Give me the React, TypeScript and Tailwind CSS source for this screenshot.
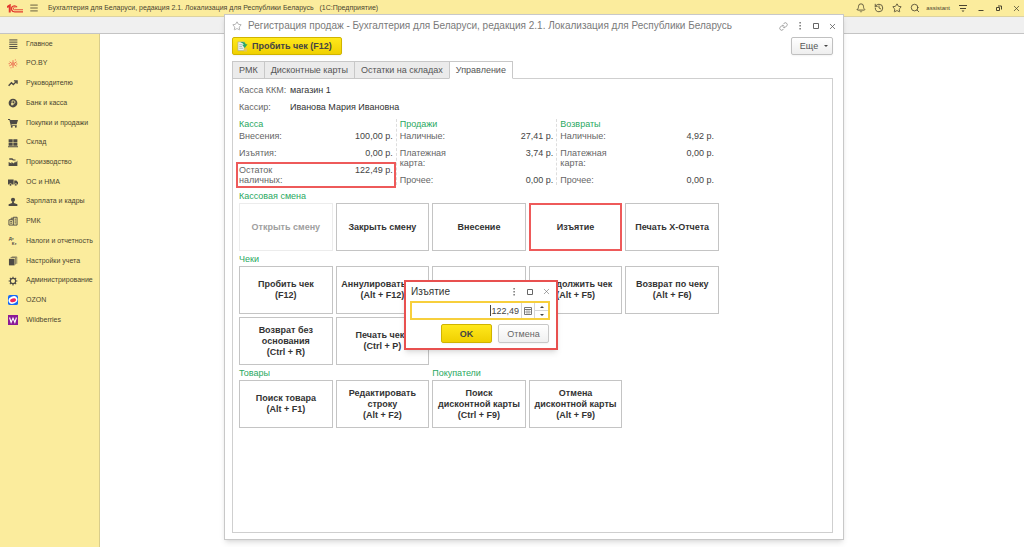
import React from "react";
import { Bell, History, Link, Menu, Search, Star, X } from "lucide-react";

type Tile = {
  lines: string[];
  label?: string;
  disabled?: boolean;
  marked?: boolean;
};

type Total = { name: string; value: string; marked?: boolean };

const dark = "#4d4a45";

const sections: { name: string; icon: React.ReactNode }[] = [
  {
    name: "Главное",
    icon: (
      <path d="M2 1.500h13M2 5h13M2 8.500h13M2 12h13M2 15h13" stroke={dark} strokeWidth="1.600" />
    ),
  },
  {
    name: "PO.BY",
    icon: (
      <g stroke="#e5483c" fill="none" strokeWidth="1.200">
        <path d="M8 2v4M8 10v4M2.500 4.500l3.700 2.500M9.800 9l3.700 2.500M2 11l4-2M9.800 7l4-2.500" />
        <circle cx="8" cy="8" r="1.800" />
        <path d="M1 7.500h2M13 8h2M4 14h1.500M11 1.500h1.500" />
      </g>
    ),
  },
  {
    name: "Руководителю",
    icon: (
      <path
        d="M1 12.500l4.500-5 3 3L14 5M9.500 4.500H14.500V9"
        fill="none"
        stroke={dark}
        strokeWidth="2.200"
      />
    ),
  },
  {
    name: "Банк и касса",
    icon: (
      <g>
        <circle cx="8" cy="8" r="7" fill={dark} />
        <path
          d="M6.500 12V4.500h2.500a2 2 0 0 1 0 4.300H5M5 10.500h4"
          fill="none"
          stroke="#fbec9d"
          strokeWidth="1.300"
        />
      </g>
    ),
  },
  {
    name: "Покупки и продажи",
    icon: (
      <g fill={dark}>
        <path d="M0 1.500h3l.8 1.800H16l-2 6.200H5.500l.3 1.300H14v1.400H4.500L2.200 3H0z" />
        <circle cx="6" cy="14" r="1.500" />
        <circle cx="12.500" cy="14" r="1.500" />
      </g>
    ),
  },
  {
    name: "Склад",
    icon: (
      <path
        d="M1 2h6.500v5H1zM8.500 2H15v5H8.500zM1 8h6.500v4.500H1zM8.500 8H15v4.500H8.500zM0 13.200h16v1.500H0z"
        fill={dark}
      />
    ),
  },
  {
    name: "Производство",
    icon: (
      <path
        d="M1 14.500V8l4.500 2.500V8l4 2.500 1.500-3h1l.5 1.500L15 5.500v9zM2 2h5l2 2h3v1.500H8L6 4.500H2z"
        fill={dark}
      />
    ),
  },
  {
    name: "ОС и НМА",
    icon: (
      <g fill={dark}>
        <path d="M0 4h9v8H0zM10 5.500h3.500L16 8.500V12h-6z" />
        <circle cx="4" cy="12.500" r="2" stroke="#fbec9d" />
        <circle cx="12.500" cy="12.500" r="2" stroke="#fbec9d" />
      </g>
    ),
  },
  {
    name: "Зарплата и кадры",
    icon: (
      <g fill={dark}>
        <circle cx="8" cy="4.500" r="3.300" />
        <path d="M6.500 7h3v2.500l5.500 2V14.500H1v-3l5.500-2z" />
      </g>
    ),
  },
  {
    name: "РМК",
    icon: (
      <g fill="none" stroke={dark} strokeWidth="1.500">
        <path d="M1.500 6h7v8.500h-7zM8.500 14.500h6V2h-6v4M5 6V3.500h3.500" />
        <path d="M10.500 5h2.500M10.500 8h2.500M10.500 11h2.500M3.500 9h3M3.500 11.500h3" />
      </g>
    ),
  },
  {
    name: "Налоги и отчетность",
    icon: (
      <g
        fill={dark}
        fontFamily="Liberation Sans, sans-serif"
        fontSize="7"
        fontWeight="bold"
      >
        <text x="1" y="7">
          Дт
        </text>
        <text x="6" y="14">
          Кт
        </text>
      </g>
    ),
  },
  {
    name: "Настройки учета",
    icon: (
      <g fill={dark}>
        <path d="M1.500 4.500h9V15h-9z" />
        <path
          d="M3.500 3.500l1-1h7.500v11M6 1.500h8v11"
          fill="none"
          stroke={dark}
        />
      </g>
    ),
  },
  {
    name: "Администрирование",
    icon: (
      <g fill="none" stroke={dark}>
        <circle cx="8" cy="8" r="4.200" strokeWidth="1.800" />
        <path
          d="M8 1v3M8 12v3M1 8h3M12 8h3M3 3l2 2M11 11l2 2M3 13l2-2M11 5l2-2"
          strokeWidth="1.800"
        />
      </g>
    ),
  },
  {
    name: "OZON",
    icon: (
      <g>
        <rect width="16" height="16" rx="3" fill="#1769f5" />
        <ellipse cx="8" cy="8" rx="7.300" ry="5.800" fill="#fff" transform="rotate(-25 8 8)" />
        <ellipse cx="8" cy="8.500" rx="4.800" ry="3" fill="#f0245c" transform="rotate(-15 8 8)" />
      </g>
    ),
  },
  {
    name: "Wildberries",
    icon: (
      <g>
        <rect width="16" height="16" fill="#8b1a97" />
        <path
          d="M2.500 4l2.500 8L8 5l3 7 2.500-8"
          fill="none"
          stroke="#fff"
          strokeWidth="1.800"
        />
      </g>
    ),
  },
];

const tabs = ["РМК", "Дисконтные карты", "Остатки на складах", "Управление"];

const totals: { title: string; rows: Total[] }[] = [
  {
    title: "Касса",
    rows: [
      { name: "Внесения:", value: "100,00 р." },
      { name: "Изъятия:", value: "0,00 р." },
      { name: "Остаток наличных:", value: "122,49 р.", marked: true },
    ],
  },
  {
    title: "Продажи",
    rows: [
      { name: "Наличные:", value: "27,41 р." },
      { name: "Платежная карта:", value: "3,74 р." },
      { name: "Прочее:", value: "0,00 р." },
    ],
  },
  {
    title: "Возвраты",
    rows: [
      { name: "Наличные:", value: "4,92 р." },
      { name: "Платежная карта:", value: "0,00 р." },
      { name: "Прочее:", value: "0,00 р." },
    ],
  },
];

const shiftTiles: Tile[] = [
  { lines: ["Открыть смену"], disabled: true },
  { lines: ["Закрыть смену"] },
  { lines: ["Внесение"] },
  { lines: ["Изъятие"], marked: true },
  { lines: ["Печать X-Отчета"] },
];

const receiptTiles: Tile[] = [
  { lines: ["Пробить чек", "(F12)"] },
  { lines: ["Аннулировать чек", "(Alt + F12)"] },
  { lines: [], label: "Отложить чек" },
  { lines: ["Продолжить чек", "(Alt + F5)"] },
  { lines: ["Возврат по чеку", "(Alt + F6)"] },
  { lines: ["Возврат без", "основания", "(Ctrl + R)"] },
  { lines: ["Печать чека", "(Ctrl + P)"] },
];

const goodsTiles: Tile[] = [
  { lines: ["Поиск товара", "(Alt + F1)"] },
  { lines: ["Редактировать", "строку", "(Alt + F2)"] },
];

const customerTiles: Tile[] = [
  { lines: ["Поиск", "дисконтной карты", "(Ctrl + F9)"] },
  { lines: ["Отмена", "дисконтной карты", "(Alt + F9)"] },
];

const TileButton = ({ tile }: { tile: Tile }) => {
  let look = "border border-[#c4c4c4] text-[#333]";
  if (tile.disabled) look = "border border-[#ececec] text-[#a0a0a0]";
  if (tile.marked) look = "border-2 border-[#ee5a5a] text-[#333]";
  return (
    <button
      disabled={tile.disabled}
      aria-label={tile.label}
      className={`flex h-12 flex-col items-center justify-center bg-white text-[9px] leading-[11px] font-bold whitespace-nowrap ${look}`}
    >
      {tile.lines.map((line) => (
        <span key={line}>{line}</span>
      ))}
    </button>
  );
};

const GroupTitle = ({ children }: { children: React.ReactNode }) => (
  <h2 className="h-[15px] leading-[17px] text-[#2aa861]">{children}</h2>
);

const Dots = () => (
  <svg viewBox="0 0 8 8" className="h-2 w-2" fill="#555">
    <path d="M3.500 0h1.200v1.500H3.500zM3.500 3h1.200v1.500H3.500zM3.500 6h1.200v1.500H3.500z" />
  </svg>
);

const Square = () => (
  <svg viewBox="0 0 8 8" className="h-2 w-2" fill="none" stroke="#666">
    <path d="M1.500 1.500h5v5h-5z" />
  </svg>
);

const WithdrawDialog = () => (
  <div
    role="dialog"
    aria-label="Изъятие"
    className="absolute top-[265px] left-[179px] w-[154px] border-2 border-[#e8504f] bg-white pr-1.5 pb-[5px] pl-1 shadow-md"
  >
    <div className="-mr-0.5 flex h-[19px] items-center">
      <span className="grow pl-px text-[10px] text-[#333]">Изъятие</span>
      <div className="flex items-center gap-2 pr-px">
        <button aria-label="Меню">
          <Dots />
        </button>
        <button aria-label="Развернуть">
          <Square />
        </button>
        <button aria-label="Закрыть">
          <X size={9} color="#666" strokeWidth={1.5} />
        </button>
      </div>
    </div>
    <div className="flex h-[19px] items-stretch border-2 border-[#f7cf3c]">
      <input
        aria-label="Сумма"
        defaultValue="122,49"
        className="my-0.5 ml-auto w-[29px] border-l border-[#444] text-right text-[9px] text-[#444] outline-none"
      />
      <button
        aria-label="Калькулятор"
        className="ml-0.5 flex w-[13px] items-center justify-center border-l border-[#d5d5d5]"
      >
        <svg viewBox="0 0 8 8" className="h-2 w-2" fill="none" stroke="#777">
          <path d="M.5.5h7v7h-7zM.5 2.500h7" />
          <path d="M3 3v5M5 3v5M1 5h6" strokeWidth=".6" />
        </svg>
      </button>
      <div className="flex w-[14px] flex-col border-l border-[#d5d5d5]">
        <button
          aria-label="Больше"
          className="flex grow items-center justify-center"
        >
          <svg viewBox="0 0 4 2" className="h-0.5 w-1" fill="#444">
            <path d="M0 2l2-2 2 2z" />
          </svg>
        </button>
        <button
          aria-label="Меньше"
          className="flex grow items-center justify-center border-t border-[#d5d5d5]"
        >
          <svg viewBox="0 0 4 2" className="h-0.5 w-1" fill="#444">
            <path d="M0 0l2 2 2-2z" />
          </svg>
        </button>
      </div>
    </div>
    <div className="mt-1 flex justify-end gap-1.5 pr-px">
      <button className="h-[19px] w-[51px] rounded-xs border border-[#d0b400] bg-linear-to-b from-[#ffe81a] to-[#f0d000] font-bold text-[#444] shadow-xs">
        OK
      </button>
      <button className="h-[19px] w-[51px] rounded-xs border border-[#c8c8c8] bg-linear-to-b from-white to-[#f0f0f0] text-[#666] shadow-xs">
        Отмена
      </button>
    </div>
  </div>
);

const SalesWindow = () => (
  <section className="absolute top-[14px] right-[180px] bottom-[7px] left-[224px] flex min-w-[600px] flex-col border border-[#c8c8c8] bg-white pr-2.5 pb-1.5 pl-[7px] text-[9px] leading-[10px] text-[#666] shadow-md">
    <div className="-mr-1 flex h-[22px] items-center">
      <Star size={10} color="#888" strokeWidth={1.5} />
      <h1 className="grow pl-1.5 text-[10px] text-[#7a7a7a]">
        Регистрация продаж - Бухгалтерия для Беларуси, редакция 2.1. Локализация
        для Республики Беларусь
      </h1>
      <div className="flex items-center gap-2">
        <button aria-label="Ссылка">
          <Link size={9} color="#666" strokeWidth={1.5} />
        </button>
        <button aria-label="Меню">
          <Dots />
        </button>
        <button aria-label="Развернуть">
          <Square />
        </button>
        <button aria-label="Закрыть">
          <X size={9} color="#555" />
        </button>
      </div>
    </div>

    <div className="flex items-center justify-between">
      <button className="flex h-[18px] w-[110px] items-center gap-1 rounded-xs border border-[#d0b400] bg-linear-to-b from-[#ffe81a] to-[#f0d000] pl-1 font-bold whitespace-nowrap text-[#444] shadow-xs">
        <svg viewBox="0 0 12 12" className="h-[11px] w-[11px] shrink-0">
          <path
            d="M1 1h7v9.500H1z"
            fill="#eef0ee"
            stroke="#a9a98a"
            strokeWidth=".7"
          />
          <path
            d="M2.500 4h3M2.500 6h3M2.500 8h4"
            stroke="#8fa3a8"
            strokeWidth=".7"
          />
          <path d="M3.500 1.500C7 .5 9 1 9.500 3.500h2L8.500 7.500 5.500 4h2C7 2.500 5.500 2 3.500 1.500z" fill="#29a567" />
          <path d="M7.500 8h3.500v3.500H7.500z" fill="#e3c65c" />
        </svg>
        Пробить чек (F12)
      </button>
      <button className="flex h-[18px] w-[42px] items-center justify-center gap-1.5 rounded-xs border border-[#c0c0c0] bg-linear-to-b from-white to-[#eee] pl-1 text-[#555] shadow-xs">
        Еще
        <svg viewBox="0 0 4 2" className="h-0.5 w-1" fill="#444">
          <path d="M0 0h4L2 2z" />
        </svg>
      </button>
    </div>

    <div role="tablist" className="z-10 mt-1.5 -mb-px flex h-[18px]">
      {tabs.map((tab) => (
        <button
          key={tab}
          role="tab"
          aria-selected={tab === "Управление"}
          className="-mr-px border border-[#c8c8c8] bg-[#ebebeb] px-1.5 text-[#555] aria-selected:border-b-white aria-selected:bg-white"
        >
          {tab}
        </button>
      ))}
    </div>

    <div className="grow border border-[#cfcfcf] px-1.5 pt-1.5">
      <dl className="grid grid-cols-[51px_1fr] gap-y-[7px]">
        <dt className="whitespace-nowrap">Касса ККМ:</dt>
        <dd className="text-[#333]">магазин 1</dd>
        <dt>Кассир:</dt>
        <dd className="text-[#333]">Иванова Мария Ивановна</dd>
      </dl>

      <div className="mt-[7px] grid w-[482px] grid-cols-3">
        {totals.map((group) => (
          <div
            key={group.title}
            className="mr-[3px] border-r border-dashed border-[#ddd] pr-[3px] last:border-transparent"
          >
            <h2 className="mb-0.5 text-[#2aa861]">{group.title}</h2>
            <dl className="flex flex-col gap-[7px]">
              {group.rows.map((row) => (
                <div
                  key={row.name}
                  className={
                    row.marked
                      ? "-mx-[3px] -my-[3px] flex justify-between border-2 border-[#ee5a5a] p-px"
                      : "flex justify-between"
                  }
                >
                  <dt className="w-[50px]">{row.name}</dt>
                  <dd className="text-[#444]">{row.value}</dd>
                </div>
              ))}
            </dl>
          </div>
        ))}
      </div>

      <div className="mt-[3px] w-[480px]">
        <GroupTitle>Кассовая смена</GroupTitle>
        <div className="grid grid-cols-5 gap-[3px]">
          {shiftTiles.map((tile) => (
            <TileButton key={tile.lines[0]} tile={tile} />
          ))}
        </div>
        <GroupTitle>Чеки</GroupTitle>
        <div className="grid grid-cols-5 gap-[3px]">
          {receiptTiles.map((tile) => (
            <TileButton key={tile.label ?? tile.lines[0]} tile={tile} />
          ))}
        </div>
        <div className="grid grid-cols-5 gap-x-[3px]">
          <div className="col-span-2">
            <GroupTitle>Товары</GroupTitle>
            <div className="grid grid-cols-2 gap-[3px]">
              {goodsTiles.map((tile) => (
                <TileButton key={tile.lines[0]} tile={tile} />
              ))}
            </div>
          </div>
          <div className="col-span-2">
            <GroupTitle>Покупатели</GroupTitle>
            <div className="grid grid-cols-2 gap-[3px]">
              {customerTiles.map((tile) => (
                <TileButton key={tile.lines[0]} tile={tile} />
              ))}
            </div>
          </div>
        </div>
      </div>
    </div>

    <WithdrawDialog />
  </section>
);

const App = () => {
  return (
    <div className="relative flex min-h-screen flex-col bg-white font-['Liberation_Sans',Arial,sans-serif]">
      <header className="flex h-[17px] items-center border-b border-[#ddd3a0] bg-[#fbec9d] pr-[3px] pl-[7px] text-[7px] text-[#4a4530]">
        <svg
          viewBox="0 0 32 18"
          className="h-[9px] w-4"
          fill="none"
          stroke="#e2382f"
        >
          <path d="M0 6.500L5.500 3v14" strokeWidth="4" />
          <path d="M20 6.500A6 6 0 1 0 14.500 15.500H32" strokeWidth="2.500" />
          <path d="M17 7.500a2.500 2.500 0 1 0-2.500 4H32" strokeWidth="1.800" />
        </svg>
        <button aria-label="Меню" className="ml-1.5">
          <Menu size={10} strokeWidth={2} />
        </button>
        <span className="grow pl-[9px] whitespace-pre">
          Бухгалтерия для Беларуси, редакция 2.1. Локализация для Республики
          Беларусь {"  "}(1С:Предприятие)
        </span>
        <div className="flex items-center gap-2">
          <button aria-label="Уведомления">
            <Bell size={10} />
          </button>
          <button aria-label="История">
            <History size={10} />
          </button>
          <button aria-label="Избранное">
            <Star size={10} />
          </button>
          <button aria-label="Поиск">
            <Search size={10} />
          </button>
          <span className="-ml-0.5 text-[6px]">assistant</span>
          <button aria-label="Настройки">
            <svg
              viewBox="0 0 10 10"
              className="h-2.5 w-2.5"
              stroke="currentColor"
            >
              <path d="M1 2.500h8M2 5.500h6" />
              <path d="M3.500 7.500h3L5 9z" fill="currentColor" stroke="none" />
            </svg>
          </button>
          <button aria-label="Свернуть">
            <svg
              viewBox="0 0 10 10"
              className="h-2.5 w-2.5"
              stroke="currentColor"
            >
              <path d="M2.500 7.500h5" />
            </svg>
          </button>
          <button aria-label="Восстановить">
            <svg
              viewBox="0 0 10 10"
              className="h-2.5 w-2.5"
              fill="none"
              stroke="currentColor"
            >
              <path d="M2.500 4.500h3v3h-3zM4 3h3.500v3.500" />
            </svg>
          </button>
          <button aria-label="Закрыть">
            <X size={9} />
          </button>
        </div>
      </header>
      <div className="h-[17px] border-b border-[#c4c4c4] bg-[#f0f0f0]" />
      <nav className="w-[100px] grow border-r border-[#d9cd8c] bg-[#fbec9d]">
        <ul className="grid h-[296px] auto-rows-fr text-[7px] text-[#4a4530]">
          {sections.map((section) => (
            <li key={section.name}>
              <a href="#" className="flex h-full items-center gap-2 pl-2">
                <svg viewBox="0 0 16 16" className="h-2.5 w-2.5 shrink-0">
                  {section.icon}
                </svg>
                {section.name}
              </a>
            </li>
          ))}
        </ul>
      </nav>
      <SalesWindow />
    </div>
  );
};

export default App;
